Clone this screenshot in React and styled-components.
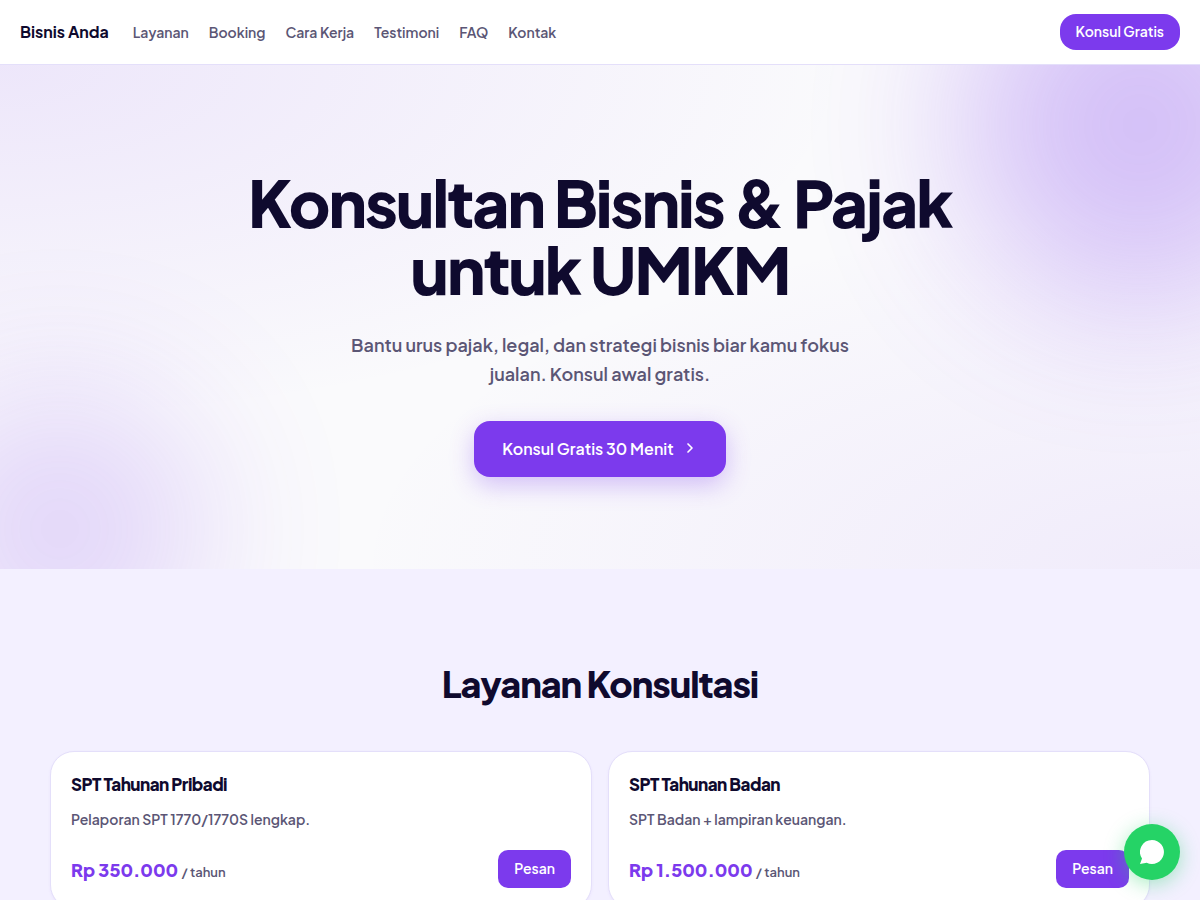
import React from 'react';
import styled, { createGlobalStyle } from 'styled-components';
import { ChevronRight } from 'lucide-react';

const Global = createGlobalStyle`
  *, *::before, *::after { box-sizing: border-box; }
  html { scrollbar-width: none; }
  body {
    margin: 0;
    background: #f3f0ff;
    color: #0f0a2e;
    font-family: 'Plus Jakarta Sans', Inter, sans-serif;
  }
  h1, h2, h3, p { margin: 0; }
  a { color: inherit; text-decoration: none; }
  button { font-family: inherit; border: 0; cursor: pointer; }
`;

const Header = styled.header`
  position: relative;
  display: flex;
  align-items: center;
  gap: 24px;
  height: 65px;
  padding: 0 20px;
  background: #fff;
  border-bottom: 1px solid #e4dffa;
`;

const Brand = styled.a`
  font-size: 16px;
  line-height: 24px;
  font-weight: 700;
`;

const Nav = styled.nav`
  display: flex;
  flex: 1;
  gap: 20px;
  color: #5b5675;
  font-size: 14px;
  line-height: 20px;
  font-weight: 600;
`;

const Button = styled.button`
  display: inline-flex;
  align-items: center;
  justify-content: center;
  flex: none;
  height: ${(p) => (p.$round ? 36 : 38)}px;
  padding: 0 16px 2px;
  border-radius: ${(p) => (p.$round ? 16 : 10)}px;
  color: #fff;
  background: #7c3aed;
  font-size: 14px;
  font-weight: 600;
`;

const HeroButton = styled(Button)`
  gap: 8px;
  height: 56px;
  padding: 0 28px 2px;
  border-radius: 16px;
  font-size: 16px;
  box-shadow: 0 8px 24px rgba(124, 58, 237, 0.3);
`;

const Hero = styled.section`
  position: relative;
  isolation: isolate;
  overflow: hidden;
  display: flex;
  flex-direction: column;
  align-items: center;
  padding: 104px 24px 92px;
  text-align: center;
  background:
    radial-gradient(ellipse at top left, rgba(124, 58, 237, 0.1), transparent 50%),
    radial-gradient(ellipse at bottom right, rgba(124, 58, 237, 0.08), transparent 50%),
    #fafafc;
`;

const Glow = styled.span`
  position: absolute;
  z-index: -1;
  border-radius: 50%;
  background: #7c3aed;
  filter: blur(80px);
`;

const TopGlow = styled(Glow)`
  top: -120px;
  right: -120px;
  width: 360px;
  height: 360px;
  opacity: 0.3;
`;

const BottomGlow = styled(Glow)`
  bottom: -100px;
  left: -80px;
  width: 280px;
  height: 280px;
  opacity: 0.2;
`;

const Title = styled.h1`
  max-width: 760px;
  font-size: 64px;
  line-height: 67px;
  font-weight: 800;
  letter-spacing: -0.03em;
`;

const Lead = styled.p`
  max-width: 520px;
  margin: 27px 0 33px;
  color: #5b5675;
  font-size: 18px;
  line-height: 29px;
  font-weight: 600;
`;

const Services = styled.section`
  padding: 91px 24px;
`;

const Heading = styled.h2`
  font-size: 36px;
  line-height: 48px;
  font-weight: 800;
  letter-spacing: -0.03em;
  text-align: center;
`;

const Cards = styled.div`
  display: grid;
  grid-template-columns: repeat(auto-fit, minmax(320px, 1fr));
  gap: 16px;
  max-width: 1100px;
  margin: 43px auto 0;
`;

const Card = styled.article`
  padding: 20px;
  background: #fff;
  border: 1px solid #e4dffa;
  border-radius: 24px;
  box-shadow: 0 1px 3px rgba(124, 58, 237, 0.06);
`;

const CardTitle = styled.h3`
  font-size: 17px;
  line-height: 24px;
  font-weight: 800;
  letter-spacing: -0.03em;
`;

const CardText = styled.p`
  margin-top: 12px;
  color: #5b5675;
  font-size: 14px;
  line-height: 22px;
  font-weight: 600;
`;

const CardFooter = styled.div`
  display: flex;
  align-items: flex-end;
  justify-content: space-between;
  margin-top: 20px;
`;

const Price = styled.strong`
  color: #7c3aed;
  font-size: 18px;
  line-height: 32px;
  font-weight: 800;
`;

const Unit = styled.span`
  color: #5b5675;
  font-size: 13px;
  font-weight: 600;
`;

const Chat = styled.a`
  position: fixed;
  right: 20px;
  bottom: 20px;
  display: grid;
  place-items: center;
  width: 56px;
  height: 56px;
  border-radius: 50%;
  color: #fff;
  background: #25d366;
  box-shadow: 0 4px 20px rgba(37, 211, 102, 0.4);
`;

const links = ['Layanan', 'Booking', 'Cara Kerja', 'Testimoni', 'FAQ', 'Kontak'];

const services = [
  { name: 'SPT Tahunan Pribadi', text: 'Pelaporan SPT 1770/1770S lengkap.', price: 'Rp 350.000', unit: '/ tahun' },
  { name: 'SPT Tahunan Badan', text: 'SPT Badan + lampiran keuangan.', price: 'Rp 1.500.000', unit: '/ tahun' },
];

export default function App() {
  return (
    <>
      <Global />
      <Header>
        <Brand href="#">Bisnis Anda</Brand>
        <Nav>
          {links.map((t) => (
            <a key={t} href="#">{t}</a>
          ))}
        </Nav>
        <Button $round>Konsul Gratis</Button>
      </Header>
      <main>
        <Hero>
          <TopGlow />
          <BottomGlow />
          <Title>Konsultan Bisnis &amp; Pajak untuk UMKM</Title>
          <Lead>Bantu urus pajak, legal, dan strategi bisnis biar kamu fokus jualan. Konsul awal gratis.</Lead>
          <HeroButton>
            Konsul Gratis 30 Menit
            <ChevronRight size={16} strokeWidth={2.5} />
          </HeroButton>
        </Hero>
        <Services>
          <Heading>Layanan Konsultasi</Heading>
          <Cards>
            {services.map((s) => (
              <Card key={s.name}>
                <CardTitle>{s.name}</CardTitle>
                <CardText>{s.text}</CardText>
                <CardFooter>
                  <Price>
                    {s.price} <Unit>{s.unit}</Unit>
                  </Price>
                  <Button>Pesan</Button>
                </CardFooter>
              </Card>
            ))}
          </Cards>
        </Services>
      </main>
      <Chat href="#" aria-label="Chat">
        <svg width="24" height="24" viewBox="0 0 24 24" fill="currentColor">
          <path d="M12 0a12 12 0 1 1-5.3 22.8L0 24l2-5.400A12 12 0 0 1 12 0z" />
        </svg>
      </Chat>
    </>
  );
}
